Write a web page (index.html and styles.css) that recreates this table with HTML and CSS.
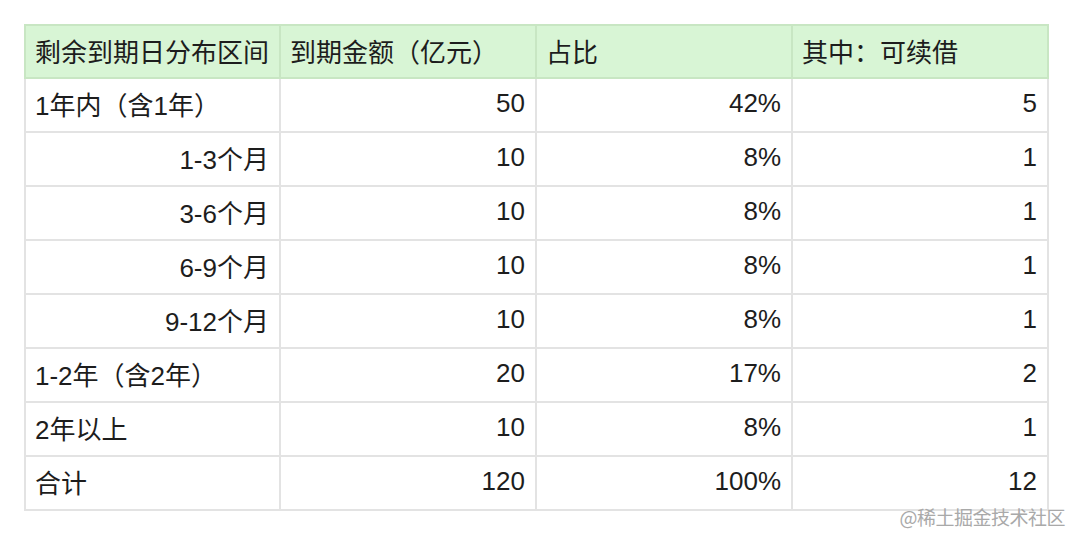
FILE: index.html
```html
<!DOCTYPE html>
<html lang="zh">
<head>
<meta charset="utf-8">
<link rel="stylesheet" href="styles.css">
</head>
<body>
<div class="page">
  <table class="grid">
    <colgroup>
      <col class="c1"><col class="c2"><col class="c3"><col class="c4">
    </colgroup>
    <thead>
      <tr>
        <th>剩余到期日分布区间</th>
        <th>到期金额（亿元）</th>
        <th>占比</th>
        <th>其中：可续借</th>
      </tr>
    </thead>
    <tbody>
      <tr><td>1年内（含1年）</td><td class="num">50</td><td class="num">42%</td><td class="num">5</td></tr>
      <tr><td class="num">1-3个月</td><td class="num">10</td><td class="num">8%</td><td class="num">1</td></tr>
      <tr><td class="num">3-6个月</td><td class="num">10</td><td class="num">8%</td><td class="num">1</td></tr>
      <tr><td class="num">6-9个月</td><td class="num">10</td><td class="num">8%</td><td class="num">1</td></tr>
      <tr><td class="num">9-12个月</td><td class="num">10</td><td class="num">8%</td><td class="num">1</td></tr>
      <tr><td>1-2年（含2年）</td><td class="num">20</td><td class="num">17%</td><td class="num">2</td></tr>
      <tr><td>2年以上</td><td class="num">10</td><td class="num">8%</td><td class="num">1</td></tr>
      <tr><td>合计</td><td class="num">120</td><td class="num">100%</td><td class="num">12</td></tr>
    </tbody>
  </table>
  <div class="mark">@稀土掘金技术社区</div>
</div>
</body>
</html>
```

FILE: styles.css
```css
html, body {
  margin: 0;
  padding: 0;
  background: #ffffff;
}
.page {
  width: 1072px;
  height: 534px;
  position: relative;
  padding: 24px 0 0 24px;
  box-sizing: border-box;
  font-family: "Liberation Sans", "Noto Sans CJK SC", sans-serif;
  color: #1d1d1d;
}
.grid {
  border-collapse: collapse;
  table-layout: fixed;
  width: 1024px;
  font-size: 26px;
}
.c1 { width: 255px; }
.c2 { width: 256px; }
.c3 { width: 256px; }
.c4 { width: 256px; }
.grid th, .grid td {
  border: 2px solid #e3e3e3;
  height: 49px;
  padding: 0 10px 3px 9px;
  text-align: left;
  font-weight: normal;
  white-space: nowrap;
  vertical-align: middle;
}
.grid thead th {
  background: #d8f5d5;
  border-color: #c8e6c3;
  height: 48px;
}
.grid td.num {
  text-align: right;
}
.mark {
  position: absolute;
  right: 7px;
  bottom: 4px;
  font-family: "Noto Sans CJK SC", sans-serif;
  font-size: 19px;
  color: #a9a9a9;
  letter-spacing: -0.5px;
}
```
